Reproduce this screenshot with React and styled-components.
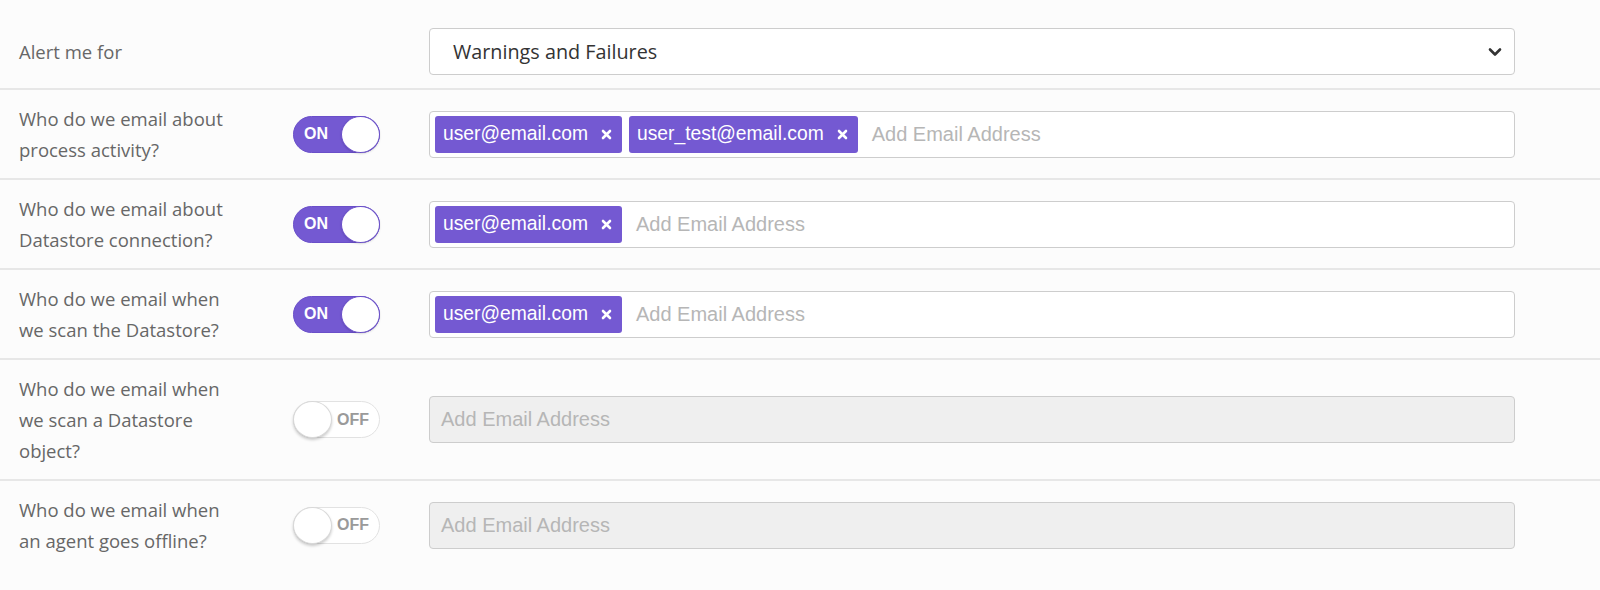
import React from "react";
import styled, { createGlobalStyle } from "styled-components";

const Global = createGlobalStyle`
  html, body { margin: 0; padding: 0; background: #fcfcfc; }
  body { font-family: "Open Sans", "Liberation Sans", sans-serif; }
  * { box-sizing: border-box; }
`;

const Page = styled.div`
  width: 1600px;
  background: #fcfcfc;
`;

const Row = styled.div`
  display: grid;
  grid-template-columns: 274px 136px 1fr;
  align-items: center;
  padding: ${(p) => (p.$first ? "28px 85px 13px 19px" : "20px 85px 20px 19px")};
  border-bottom: 2px solid #e7e7e7;
  &:last-child { border-bottom: none; }
`;

const Label = styled.div`
  font-size: 18.5px;
  line-height: 31px;
  color: #676767;
  white-space: nowrap;
  margin: -7px 0;
`;

const FullCell = styled.div`
  grid-column: 3;
`;

const Select = styled.div`
  height: 47px;
  background: #fff;
  border: 1px solid #cdcdcd;
  border-radius: 4px;
  display: flex;
  align-items: center;
  justify-content: space-between;
  padding: 0 12px 0 23px;
  font-size: 19.8px;
  color: #333;
`;

const Chevron = () => (
  <svg width="14" height="10" viewBox="0 0 14 10">
    <path d="M2 2.5 L7 7.5 L12 2.5" fill="none" stroke="#333" strokeWidth="2.6" strokeLinecap="round" strokeLinejoin="round" />
  </svg>
);

const Toggle = styled.div`
  position: relative;
  width: 87px;
  height: 37px;
  border-radius: 19px;
  background: ${(p) => (p.$on ? "#7459d2" : "#fff")};
  border: 1px solid ${(p) => (p.$on ? "#6a4fc9" : "#e2e2e2")};
  display: flex;
  align-items: center;
  justify-content: ${(p) => (p.$on ? "flex-start" : "flex-end")};
  padding: ${(p) => (p.$on ? "0 0 0 10px" : "0 10px 0 0")};
  font-family: "Liberation Sans", Arial, sans-serif;
  font-weight: bold;
  font-size: 16px;
  color: ${(p) => (p.$on ? "#fff" : "#9a9a9a")};
`;

const Knob = styled.span`
  position: absolute;
  top: -1px;
  ${(p) => (p.$on ? "right: -1px;" : "left: -1px;")}
  width: 39px;
  height: 37px;
  border-radius: 50%;
  background: #fff;
  border: 1px solid ${(p) => (p.$on ? "#6a4fc9" : "#d8d8d8")};
  box-shadow: ${(p) => (p.$on ? "0 1px 2px rgba(0,0,0,0.15)" : "0 2px 3px rgba(0,0,0,0.2)")};
`;

const TagBox = styled.div`
  height: 47px;
  border: 1px solid #cdcdcd;
  border-radius: 4px;
  background: ${(p) => (p.$disabled ? "#efefef" : "#fff")};
  display: flex;
  align-items: center;
  gap: 7px;
  padding: ${(p) => (p.$disabled ? "0 0 0 11px" : "0 0 0 5px")};
  font-family: "Liberation Sans", Arial, sans-serif;
`;

const Tag = styled.span`
  height: 37px;
  background: #7459d2;
  border-radius: 3px;
  color: #fff;
  display: inline-flex;
  align-items: center;
  gap: 13px;
  padding: 0 10px 0 8px;
  font-size: 19.3px;
`;

const Placeholder = styled.span`
  color: #b6b6b6;
  font-size: 20px;
  margin-left: ${(p) => (p.$afterTag ? "7px" : "0")};
`;

const XIcon = () => (
  <svg width="11" height="11" viewBox="0 0 11 11">
    <path d="M2 2 L9 9 M9 2 L2 9" stroke="#fff" strokeWidth="2.6" strokeLinecap="round" />
  </svg>
);

const rows = [
  { label: ["Who do we email about", "process activity?"], on: true, tags: ["user@email.com", "user_test@email.com"] },
  { label: ["Who do we email about", "Datastore connection?"], on: true, tags: ["user@email.com"] },
  { label: ["Who do we email when", "we scan the Datastore?"], on: true, tags: ["user@email.com"] },
  { label: ["Who do we email when", "we scan a Datastore", "object?"], on: false, tags: [] },
  { label: ["Who do we email when", "an agent goes offline?"], on: false, tags: [] },
];

export default function App() {
  return (
    <Page>
      <Global />
      <Row $first>
        <Label>Alert me for</Label>
        <FullCell>
          <Select>
            <span>Warnings and Failures</span>
            <Chevron />
          </Select>
        </FullCell>
      </Row>
      {rows.map((r, i) => (
        <Row key={i}>
          <Label>
            {r.label.map((l, j) => (
              <div key={j}>{l}</div>
            ))}
          </Label>
          <div>
            <Toggle $on={r.on}>
              {r.on ? "ON" : "OFF"}
              <Knob $on={r.on} />
            </Toggle>
          </div>
          <TagBox $disabled={!r.on}>
            {r.tags.map((t) => (
              <Tag key={t}>
                {t}
                <XIcon />
              </Tag>
            ))}
            <Placeholder $afterTag={r.tags.length > 0}>Add Email Address</Placeholder>
          </TagBox>
        </Row>
      ))}
    </Page>
  );
}
